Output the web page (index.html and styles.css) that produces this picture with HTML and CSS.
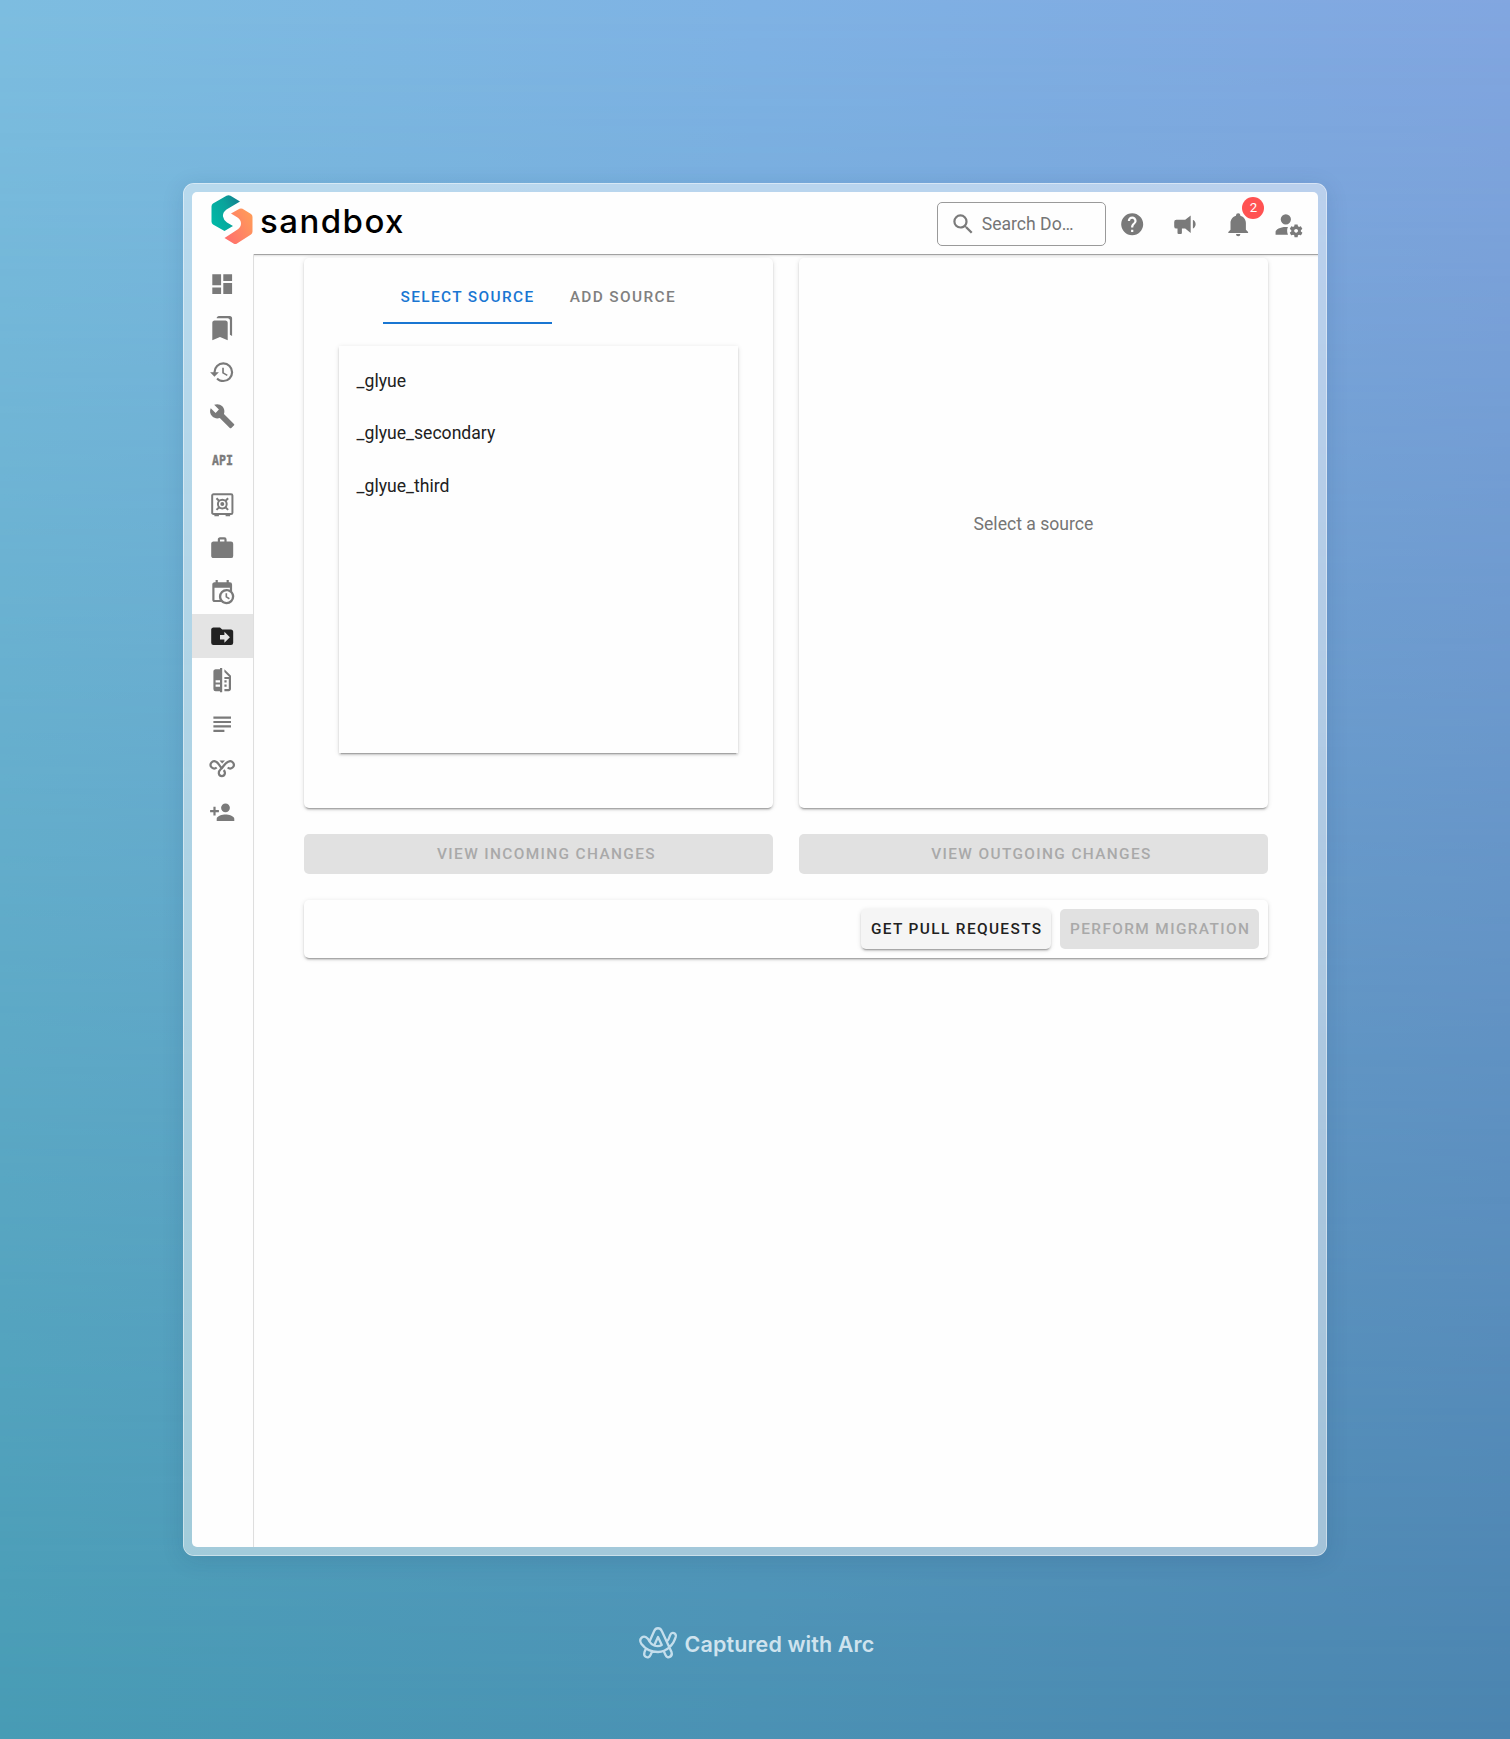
FILE: index.html
```html
<!DOCTYPE html>
<html lang="en">
<head>
<meta charset="utf-8">
<title>Sandbox – Migration</title>
<link rel="stylesheet" href="styles.css">
</head>
<body>
<div class="backdrop">
  <div class="frame">
    <div class="app">
      <header class="topbar">
        <div class="brand">
          <svg class="brand-mark" viewBox="0 0 42 50">
            <defs>
              <linearGradient id="teal" x1="0" y1="0.7" x2="1" y2="0.1"><stop offset="0" stop-color="#00b8a6"/><stop offset="0.55" stop-color="#0aa39b"/><stop offset="1" stop-color="#127d8e"/></linearGradient>
              <linearGradient id="coral" x1="0" y1="1" x2="1" y2="0.3"><stop offset="0" stop-color="#ff6b70"/><stop offset="1" stop-color="#ff9a5a"/></linearGradient>
            </defs>
            <path fill="url(#teal)" d="M15.500.7Q17.500-.4 19.500.7L29 6.500 15.500 14.500Q11.500 17.500 12 21.500 12.500 25 16 27.500L22 31 13.500 36 2 29.500Q.5 28.500.5 26.500V11.500Q.5 9.500 2 8.500Z"/>
            <path fill="url(#coral)" d="M20 18.500 28.500 13.800Q30 13 31.500 13.800L40 19Q41.500 20 41.500 22V36.500Q41.500 38.500 40 39.500L26 48.500Q24.500 49.500 22.500 48.500L13.500 43 26.500 34.500Q30 32 30 28.500 30 25 26.500 22.500Z"/>
          </svg>
          <span class="brand-name">sandbox</span>
        </div>
        <div class="search">
          <svg class="icon" viewBox="0 0 24 24"><path d="M9.500 3A6.500 6.500 0 0 1 16 9.500C16 11.110 15.410 12.590 14.440 13.730L14.710 14H15.500L20.500 19 19 20.500 14 15.500V14.710L13.730 14.440C12.590 15.410 11.110 16 9.500 16A6.500 6.500 0 0 1 9.500 3M9.500 5A4.500 4.500 0 1 0 9.500 14 4.500 4.500 0 0 0 9.500 5Z"/></svg>
          <span>Search Do…</span>
        </div>
        <div class="action"><svg class="icon" viewBox="0 0 24 24"><path d="M15.070,11.250L14.170,12.170C13.450,12.890 13,13.500 13,15H11V14.500C11,13.390 11.450,12.390 12.170,11.670L13.410,10.410C13.780,10.050 14,9.550 14,9C14,7.890 13.100,7 12,7A2,2 0 0,0 10,9H8A4,4 0 0,1 12,5A4,4 0 0,1 16,9C16,9.880 15.640,10.670 15.070,11.250M13,19H11V17H13M12,2A10,10 0 0,0 2,12A10,10 0 0,0 12,22A10,10 0 0,0 22,12C22,6.470 17.500,2 12,2Z"/></svg></div>
        <div class="action"><svg class="icon" viewBox="0 0 24 24"><path d="M12,8H4A2,2 0 0,0 2,10V14A2,2 0 0,0 4,16H5V20A1,1 0 0,0 6,21H8A1,1 0 0,0 9,20V16H12L17,20V4L12,8M21.500,12C21.500,13.710 20.540,15.260 19,16V8C20.530,8.750 21.500,10.300 21.500,12Z"/></svg></div>
        <div class="action"><svg class="icon" viewBox="0 0 24 24"><path d="M21,19V20H3V19L5,17V11C5,7.900 7.030,5.170 10,4.290C10,4.190 10,4.100 10,4A2,2 0 0,1 12,2A2,2 0 0,1 14,4C14,4.100 14,4.190 14,4.290C16.970,5.170 19,7.900 19,11V17L21,19M14,21A2,2 0 0,1 12,23A2,2 0 0,1 10,21"/></svg><span class="badge">2</span></div>
        <div class="action action-account"><svg class="icon icon-lg" viewBox="0 0 24 24"><path d="M10 4A4 4 0 0 0 6 8A4 4 0 0 0 10 12A4 4 0 0 0 14 8A4 4 0 0 0 10 4M17 12C16.870 12 16.760 12.090 16.740 12.210L16.550 13.530C16.250 13.660 15.960 13.820 15.700 14L14.460 13.500C14.350 13.500 14.220 13.500 14.150 13.630L13.150 15.360C13.090 15.470 13.110 15.600 13.210 15.680L14.270 16.500C14.250 16.670 14.240 16.830 14.240 17C14.240 17.170 14.250 17.330 14.270 17.500L13.210 18.320C13.120 18.400 13.090 18.530 13.150 18.640L14.150 20.370C14.210 20.500 14.340 20.500 14.460 20.500L15.700 20C15.960 20.180 16.240 20.350 16.550 20.470L16.740 21.790C16.760 21.910 16.860 22 17 22H19C19.110 22 19.220 21.910 19.240 21.790L19.430 20.470C19.730 20.340 20 20.180 20.270 20L21.500 20.500C21.630 20.500 21.760 20.500 21.830 20.370L22.830 18.640C22.890 18.530 22.860 18.400 22.770 18.320L21.700 17.500C21.720 17.330 21.740 17.170 21.740 17C21.740 16.830 21.730 16.670 21.700 16.500L22.760 15.680C22.850 15.600 22.880 15.470 22.820 15.360L21.820 13.630C21.760 13.500 21.630 13.500 21.500 13.500L20.270 14C20 13.820 19.730 13.650 19.420 13.530L19.230 12.210C19.220 12.090 19.110 12 19 12H17M10 14C5.580 14 2 15.790 2 18V20H11.680A7 7 0 0 1 11 17A7 7 0 0 1 11.640 14.090C11.110 14.030 10.560 14 10 14M18 15.500C18.830 15.500 19.500 16.170 19.500 17C19.500 17.830 18.830 18.500 18 18.500C17.160 18.500 16.500 17.830 16.500 17C16.500 16.170 17.170 15.500 18 15.500Z"/></svg></div>
      </header>
      <div class="body">
        <nav class="rail">
          <div class="rail-item"><svg class="icon" viewBox="0 0 24 24"><path d="M13,3V9H21V3M13,21H21V11H13M3,21H11V15H3M3,13H11V3H3V13Z"/></svg></div>
          <div class="rail-item"><svg class="icon" viewBox="0 0 24 24"><path d="M19 18l2 1V3c0-1.100-.9-2-2-2H8.990C7.890 1 7 1.900 7 3h10c1.100 0 2 .9 2 2v13zM15 5H5c-1.100 0-2 .9-2 2v16l7-3 7 3V7c0-1.100-.9-2-2-2z"/></svg></div>
          <div class="rail-item"><svg class="icon" viewBox="0 0 24 24"><path d="M13.500,8H12V13L16.280,15.540L17,14.330L13.500,12.250V8M13,3A9,9 0 0,0 4,12H1L4.960,16.030L9,12H6A7,7 0 0,1 13,5A7,7 0 0,1 20,12A7,7 0 0,1 13,19C11.070,19 9.320,18.210 8.060,16.940L6.640,18.360C8.270,20 10.500,21 13,21A9,9 0 0,0 22,12A9,9 0 0,0 13,3"/></svg></div>
          <div class="rail-item"><svg class="icon" viewBox="0 0 24 24"><path d="M22.700,19L13.600,9.900C14.500,7.600 14,4.900 12.100,3C10.100,1 7.100,0.600 4.700,1.700L9,6L6,9L1.600,4.700C0.400,7.100 0.900,10.100 2.900,12.100C4.800,14 7.500,14.500 9.800,13.600L18.900,22.700C19.300,23.100 19.900,23.100 20.300,22.700L22.600,20.400C23.100,20 23.100,19.300 22.700,19Z"/></svg></div>
          <div class="rail-item"><svg class="icon api" viewBox="0 0 24 24"><text class="api-label" x="2.700" y="16.500" textLength="19" lengthAdjust="spacingAndGlyphs">API</text></svg></div>
          <div class="rail-item"><svg class="icon line" viewBox="0 0 24 24"><rect x="2.900" y="2.900" width="18.400" height="18" rx="1.200"/><circle cx="12.100" cy="11.900" r="4"/><path d="M6.800 6.600 9.300 9.100M17.400 6.600 14.900 9.100M6.800 17.200 9.300 14.700M17.400 17.200 14.900 14.700M4.900 22H9M15.100 22H19.200"/><circle class="solid" cx="12.100" cy="11.900" r="1.800"/></svg></div>
          <div class="rail-item"><svg class="icon" viewBox="0 0 24 24"><path d="M10,2H14A2,2 0 0,1 16,4V6H20A2,2 0 0,1 22,8V19A2,2 0 0,1 20,21H4C2.890,21 2,20.100 2,19V8C2,6.890 2.890,6 4,6H8V4C8,2.890 8.890,2 10,2M14,6V4H10V6H14Z"/></svg></div>
          <div class="rail-item"><svg class="icon" viewBox="0 0 24 24"><path d="M15,13H16.500V15.820L18.940,17.230L18.190,18.530L15,16.690V13M19,8H5V19H9.670C9.240,18.090 9,17.070 9,16A7,7 0 0,1 16,9C17.070,9 18.090,9.240 19,9.670V8M5,21C3.890,21 3,20.100 3,19V5C3,3.890 3.890,3 5,3H6V1H8V3H16V1H18V3H19A2,2 0 0,1 21,5V11.100C22.240,12.360 23,14.090 23,16A7,7 0 0,1 16,23C14.090,23 12.360,22.240 11.100,21H5M16,11.150A4.850,4.850 0 0,0 11.150,16C11.150,18.680 13.320,20.850 16,20.850A4.850,4.850 0 0,0 20.850,16C20.850,13.320 18.680,11.150 16,11.150Z"/></svg></div>
          <div class="rail-item active"><svg class="icon" viewBox="0 0 24 24"><path d="M14,18V15H10V11H14V8L19,13M20,6H12L10,4H4C2.890,4 2,4.890 2,6V18A2,2 0 0,0 4,20H20A2,2 0 0,0 22,18V8C22,6.890 21.100,6 20,6Z"/></svg></div>
          <div class="rail-item"><svg class="icon" viewBox="0 0 24 24"><path d="M10,18H6V16H10V18M10,14H6V12H10V14M10,1V2H6C4.890,2 4,2.890 4,4V20A2,2 0 0,0 6,22H10V23H12V1H10M20,8V20C20,21.110 19.110,22 18,22H14V20H18V11H14V9H18.500L14,4.500V2L20,8M16,14H14V12H16V14M16,18H14V16H16V18Z"/></svg></div>
          <div class="rail-item"><svg class="icon" viewBox="0 0 24 24"><path d="M14 17H4v2h10v-2zm6-8H4v2h16V9zM4 15h16v-2H4v2zM4 5v2h16V5H4z"/></svg></div>
          <div class="rail-item"><svg class="icon line curl" viewBox="0 0 24 24"><path d="M7 11.400A3.300 3.300 0 1 1 6.600 6.200C9 7.600 9.500 10 11 11.300M17 11.400A3.300 3.300 0 1 0 17.400 6.200C14 7.800 13.200 10.600 10.600 13 7.800 15.600 8.800 19.200 11.700 19.200S15.300 15.600 13.300 13.800"/><path class="solid" d="M9.500 5H14.500L12 7.800Z"/></svg></div>
          <div class="rail-item"><svg class="icon" viewBox="0 0 24 24"><path d="M15,14C12.330,14 7,15.330 7,18V20H23V18C23,15.330 17.670,14 15,14M6,10V7H4V10H1V12H4V15H6V12H9V10M15,12A4,4 0 0,0 19,8A4,4 0 0,0 15,4A4,4 0 0,0 11,8A4,4 0 0,0 15,12Z"/></svg></div>
        </nav>
        <main class="main">
          <div class="columns">
            <section class="card">
              <div class="tabs">
                <div class="tab selected">Select source</div>
                <div class="tab">Add source</div>
              </div>
              <ul class="sources">
                <li>_glyue</li>
                <li>_glyue_secondary</li>
                <li>_glyue_third</li>
              </ul>
            </section>
            <section class="card placeholder">Select a source</section>
            <button class="btn" disabled>View incoming changes</button>
            <button class="btn" disabled>View outgoing changes</button>
          </div>
          <div class="actions">
            <button class="btn raised">Get pull requests</button>
            <button class="btn" disabled>Perform migration</button>
          </div>
        </main>
      </div>
    </div>
  </div>
  <footer class="credit">
    <svg class="credit-mark" viewBox="0 0 44 40"><path d="M10 26.500 8.500 30C7 35 12.500 37.500 14.500 33L16.300 29.300M13.500 19.500 18.200 9C19.800 5.300 24.200 5.300 25.800 9L35.500 30C37 34.500 31.500 37.500 29.500 33L27.700 29M13.500 19.500C12 15.500 8.500 13.500 5.800 15.500 3 17.800 4.500 20.500 5.500 22 10 28 16 30 22 30 31 29.500 37.500 23 39.700 15 40.700 10.800 35.700 9.500 34.200 13 33.300 16.300 32 18.500 30.300 20.300M13.500 19.500C14.800 21.800 16.200 22.800 18.200 23.500L22 15 25.800 23C23.500 24.300 20.500 24.300 18.200 23.500"/></svg>
    <span class="credit-text">Captured with Arc</span>
  </footer>
</div>
</body>
</html>
```
FILE: styles.css
```css
* { box-sizing: border-box; }
body { margin: 0; font-family: Roboto, sans-serif; font-size: 17.600px; color: #212121; }

.backdrop {
  position: relative;
  z-index: 0;
  display: flex;
  flex-direction: column;
  align-items: center;
  height: 1739px;
  padding-top: 183px;
  background: linear-gradient(90deg, #489cb5 0%, #4b92b4 50%, #4b85b0 100%);
}
/* upper colours fade out towards the bottom row */
.backdrop::before {
  content: "";
  position: absolute;
  inset: 0;
  z-index: -1;
  background: linear-gradient(90deg, #7dbde0 0%, #7fb2e4 50%, #82a6e0 100%);
  mask-image: linear-gradient(180deg, #000, transparent);
}

.frame {
  width: 1144px;
  height: 1373px;
  padding: 8px;
  border: 1px solid rgba(255, 255, 255, .7);
  border-radius: 11px;
  background: rgba(255, 255, 255, .48);
  background-clip: padding-box;
  box-shadow: 0 4px 22px rgba(20, 50, 90, .13);
}
.app {
  display: flex;
  flex-direction: column;
  height: 100%;
  overflow: hidden;
  border-radius: 5px;
  background: #fefefe;
}

.icon { display: block; flex: none; width: 26.400px; height: 26.400px; fill: #7a7a7a; }
.icon-lg { width: 30.800px; height: 30.800px; }
.line { fill: none; stroke: #7a7a7a; stroke-width: 1.800; }
.line .solid { fill: #7a7a7a; stroke: none; }
.curl { stroke-width: 2; }
.api { overflow: visible; }
.api-label { font: bold 13.200px "DejaVu Sans Mono", monospace; stroke: #7a7a7a; stroke-width: .4; }

.topbar { display: flex; flex: none; align-items: center; height: 62px; padding: 2px 1px 0 18.500px; }
.brand { display: flex; flex: 1; align-items: center; gap: 7.500px; }
.brand-mark { width: 42px; height: 50px; margin-top: -9px; }
.brand-name { margin-top: -7px; font: 500 33px/44px Inter, sans-serif; letter-spacing: 1.450px; color: #000; }
.search {
  display: flex;
  align-items: center;
  gap: 5px;
  width: 169px;
  height: 44px;
  padding-left: 12.500px;
  border: 1px solid #9a9a9a;
  border-radius: 5px;
  color: #757575;
}
.action { position: relative; display: flex; justify-content: center; width: 52.800px; }
.action-account { padding-right: 5px; }
.badge {
  position: absolute;
  top: -13.500px;
  left: 31px;
  width: 22px;
  height: 22px;
  border-radius: 50%;
  background: #ff5252;
  color: #fff;
  font-size: 13.200px;
  line-height: 22px;
  text-align: center;
}

.body { display: flex; flex: 1; }
.rail { width: 62px; padding-top: 8px; border-right: 1px solid #dedede; }
.rail-item { display: flex; align-items: center; justify-content: center; height: 44px; }
.rail-item.active { background: #e4e4e4; }
.rail-item.active .icon { fill: #212121; }

.main { flex: 1; padding: 3px 50px 0; border-top: 1px solid #a3a3a3; box-shadow: inset 0 2px 2px -1px rgba(0, 0, 0, .12); }
.columns { display: grid; grid-template: 550px 40px / 1fr 1fr; gap: 26px; }
.card, .actions {
  border-radius: 5px;
  background: #fefefe;
  box-shadow: 0 3px 1px -2px rgba(0, 0, 0, .2), 0 2px 2px 0 rgba(0, 0, 0, .14), 0 1px 5px 0 rgba(0, 0, 0, .12);
}
.card { padding: 13px 35.500px 0 35px; }
.placeholder { display: flex; align-items: center; justify-content: center; padding: 0 0 18px; color: #757575; }

.tabs { display: flex; justify-content: center; }
.tab, .btn { font-size: 15.400px; font-weight: 500; letter-spacing: 1.375px; text-transform: uppercase; }
.tab { height: 52.800px; padding: 0 17.600px; line-height: 52.800px; color: #808080; }
.tab.selected { color: #1976d2; border-bottom: 2px solid #1976d2; }
.sources {
  height: 407px;
  margin: 22px 0 0;
  padding: 8.800px 17.600px;
  list-style: none;
  box-shadow: 0 3px 1px -2px rgba(0, 0, 0, .2), 0 2px 2px 0 rgba(0, 0, 0, .14), 0 1px 5px 0 rgba(0, 0, 0, .12);
}
.sources li { height: 52.800px; line-height: 52.800px; }

.btn { height: 40px; padding: 0 0 0 16px; border: 0; border-radius: 5px; font-family: inherit; background: #e1e1e1; color: #a9a9a9; }
.actions { display: flex; justify-content: flex-end; gap: 9px; height: 58px; margin-top: 26px; padding: 9px; }
.actions .btn { padding: 0 8.800px 0 9.800px; }
.btn.raised {
  background: #f5f5f5;
  color: #212121;
  box-shadow: 0 3px 1px -2px rgba(0, 0, 0, .2), 0 2px 2px 0 rgba(0, 0, 0, .14), 0 1px 5px 0 rgba(0, 0, 0, .12);
}

.credit { display: flex; align-items: center; gap: 5px; margin-top: 63px; font: 600 21.500px/40px Inter, sans-serif; letter-spacing: .1px; color: #cfe3ee; }
.credit-text { padding-top: 5px; }
.credit-mark { width: 44px; height: 40px; fill: none; stroke: #c4deec; stroke-width: 2.300; stroke-linejoin: round; }
```
